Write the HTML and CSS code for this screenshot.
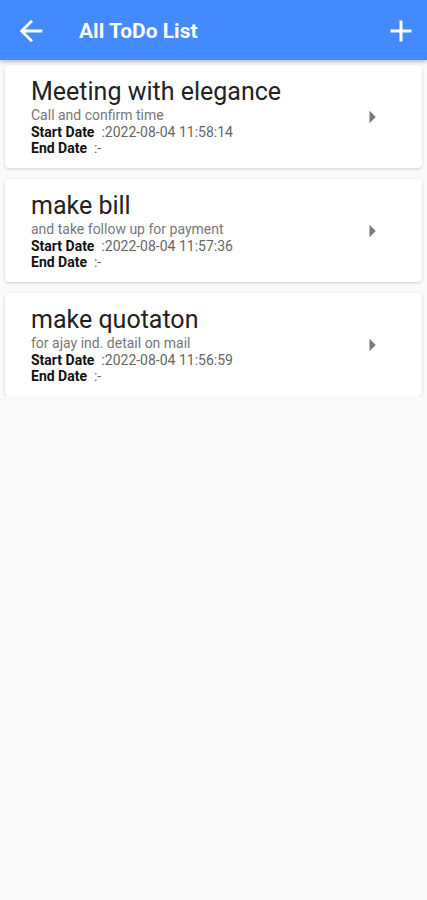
FILE: index.html
```html
<!DOCTYPE html>
<html lang="en">
<head>
    <meta charset="UTF-8">
    <meta name="viewport" content="width=device-width, initial-scale=1.0">
    <link rel="stylesheet" href="styles.css">
</head>
<body>

<div class="app-bar">
    <svg class="bar-icon" viewBox="0 0 24 24" width="34" height="34">
        <path d="M20 11H7.83l5.59-5.59L12 4l-8 8 8 8 1.41-1.41L7.83 13H20v-2z" fill="#fff"/>
    </svg>
    <div class="bar-title">All ToDo List</div>
    <svg class="bar-icon" viewBox="0 0 24 24" width="36" height="36">
        <path d="M19 13h-6v6h-2v-6H5v-2h6V5h2v6h6v2z" fill="#fff"/>
    </svg>
</div>

<div class="todo-list">
    <div class="todo-card">
        <div class="todo-text">
            <div class="todo-title">Meeting with elegance</div>
            <div class="todo-desc">Call and confirm time</div>
            <div class="todo-date"><b>Start Date</b> &nbsp;:2022-08-04 11:58:14</div>
            <div class="todo-date"><b>End Date</b> &nbsp;:-</div>
        </div>
        <svg class="chevron" viewBox="0 0 24 24" width="30" height="30">
            <path d="M10 17l5-5-5-5v10z" fill="#7b7b7b"/>
        </svg>
    </div>

    <div class="todo-card">
        <div class="todo-text">
            <div class="todo-title">make bill</div>
            <div class="todo-desc">and take follow up for payment</div>
            <div class="todo-date"><b>Start Date</b> &nbsp;:2022-08-04 11:57:36</div>
            <div class="todo-date"><b>End Date</b> &nbsp;:-</div>
        </div>
        <svg class="chevron" viewBox="0 0 24 24" width="30" height="30">
            <path d="M10 17l5-5-5-5v10z" fill="#7b7b7b"/>
        </svg>
    </div>

    <div class="todo-card">
        <div class="todo-text">
            <div class="todo-title">make quotaton</div>
            <div class="todo-desc">for ajay ind. detail on mail</div>
            <div class="todo-date"><b>Start Date</b> &nbsp;:2022-08-04 11:56:59</div>
            <div class="todo-date"><b>End Date</b> &nbsp;:-</div>
        </div>
        <svg class="chevron" viewBox="0 0 24 24" width="30" height="30">
            <path d="M10 17l5-5-5-5v10z" fill="#7b7b7b"/>
        </svg>
    </div>
</div>

</body>
</html>
```

FILE: styles.css
```css
body {
    font-family: Roboto, 'Liberation Sans', sans-serif;
    margin: 0;
    padding: 0;
    background-color: #fafafa;
    color: #212121;
}
.app-bar {
    display: flex;
    align-items: center;
    height: 60px;
    padding: 2px 8px 0 14px;
    box-sizing: border-box;
    background-color: #448aff;
    box-shadow: 0 2px 4px rgba(0, 0, 0, 0.25);
    position: relative;
}
.bar-icon {
    display: block;
    flex: none;
}
.bar-title {
    flex: 1;
    margin-left: 31px;
    color: #fff;
    font-size: 21px;
    font-weight: bold;
}
.todo-list {
    display: flex;
    flex-direction: column;
    gap: 11px;
    padding: 5px 5px 0;
}
.todo-card {
    display: flex;
    align-items: flex-start;
    height: 103px;
    box-sizing: border-box;
    padding: 12px 0 0 26px;
    background-color: #fff;
    border-radius: 4px;
    box-shadow: 0 1px 3px rgba(0, 0, 0, 0.18);
}
.todo-text {
    flex: 1;
}
.todo-title {
    font-size: 25px;
    line-height: 30px;
    color: #222;
}
.todo-desc {
    font-size: 14px;
    line-height: 16.5px;
    color: #777;
}
.todo-date {
    font-size: 14px;
    line-height: 16.5px;
    color: #666;
}
.todo-date b {
    color: #111;
}
.chevron {
    display: block;
    flex: none;
    margin-right: 35px;
    margin-top: 25px;
}
```
